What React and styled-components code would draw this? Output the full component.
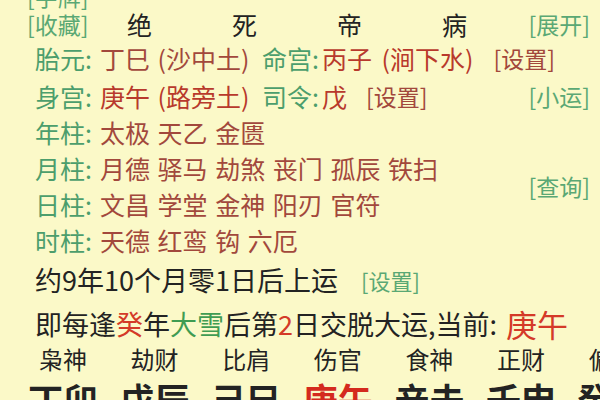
import React from "react";
import styled, { createGlobalStyle } from "styled-components";

const Global = createGlobalStyle`
  html, body { margin: 0; padding: 0; background: #fbf9c8; }
  body { font-family: "Noto Sans CJK SC", "Noto Sans", sans-serif; }
`;

const C = {
  bg: "#fbf9c8",
  green: "#4c9e6c",
  tag: "#5aa874",
  brown: "#a2483c",
  red: "#b8392c",
  bright: "#d43a28",
  ink: "#232323",
};

const Page = styled.div`
  width: 600px;
  height: 400px;
  overflow: hidden;
  background: ${C.bg};
  box-sizing: border-box;
`;

const Inner = styled.div`
  margin-top: -18px;
  padding: 0 10px 0 27px;
  display: flex;
  flex-direction: column;
`;

const Row = styled.div`
  display: flex;
  align-items: center;
  height: ${(p) => p.$h || 36}px;
  line-height: ${(p) => p.$h || 36}px;
  padding-left: ${(p) => p.$indent || 0}px;
  font-size: ${(p) => p.$size || 25}px;
  white-space: nowrap;
  color: ${C.ink};
`;

const Tag = styled.span`
  color: ${(p) => p.$color || C.tag};
  font-size: ${(p) => p.$size || 23}px;
  margin-left: ${(p) => (p.$auto ? "auto" : `${p.$ml || 0}px`)};
`;

const PhaseGrid = styled.div`
  display: grid;
  grid-template-columns: 60px repeat(4, 105px);
  align-items: center;
`;

const Phase = styled.span`
  text-align: center;
  font-size: 25px;
  color: ${C.ink};
`;

const Label = styled.span`
  color: ${C.green};
  display: inline-block;
  width: ${(p) => p.$w || 65}px;
  flex: none;
`;

const Value = styled.span`
  color: ${(p) => p.$color || C.brown};
  display: inline-block;
  width: ${(p) => (p.$w ? `${p.$w}px` : "auto")};
  flex: none;
  word-spacing: ${(p) => p.$ws || 2}px;
`;

const Split = styled.div`
  display: flex;
  align-items: center;
`;

const Stack = styled.div`
  display: flex;
  flex-direction: column;
  flex: 1;
`;

const Span = styled.span`
  color: ${(p) => p.$color || "inherit"};
  font-size: ${(p) => (p.$size ? `${p.$size}px` : "inherit")};
  margin-left: ${(p) => p.$ml || 0}px;
`;

const Cells = styled.div`
  display: flex;
  padding-left: ${(p) => p.$pl}px;
  height: ${(p) => p.$h}px;
  align-items: center;
  white-space: nowrap;
  margin-left: -27px;
`;

const Cell = styled.span`
  flex: none;
  width: 91.6px;
  font-size: ${(p) => p.$size}px;
  font-weight: ${(p) => (p.$bold ? 700 : 400)};
  color: ${(p) => p.$color || C.ink};
  line-height: 1;
`;

const gods = ["枭神", "劫财", "比肩", "伤官", "食神", "正财", "偏财"];
const pillars = ["丁卯", "戊辰", "己巳", "庚午", "辛未", "壬申", "癸酉"];

export default function App() {
  return (
    <Page>
      <Global />
      <Inner>
        <Row $h={28} $size={23}>
          <Tag>[字牌]</Tag>
        </Row>
        <Row $h={28}>
          <PhaseGrid>
            <Tag>[收藏]</Tag>
            <Phase>绝</Phase>
            <Phase>死</Phase>
            <Phase>帝</Phase>
            <Phase>病</Phase>
          </PhaseGrid>
          <Tag $auto>[展开]</Tag>
        </Row>
        <Row $h={40} $indent={8}>
          <Label>胎元:</Label>
          <Value $w={162}>丁巳 (沙中土)</Value>
          <Label $w={60}>命宫:</Label>
          <Value $color={C.red} $ws={4}>丙子 (涧下水)</Value>
          <Tag $color={C.brown} $ml={20}>[设置]</Tag>
        </Row>
        <Row $indent={8}>
          <Label>身宫:</Label>
          <Value $w={162} $color={C.red}>庚午 (路旁土)</Value>
          <Label $w={60}>司令:</Label>
          <Value $color={C.red}>戊</Value>
          <Tag $color={C.brown} $ml={19}>[设置]</Tag>
          <Tag $auto>[小运]</Tag>
        </Row>
        <Row $indent={8}>
          <Label>年柱:</Label>
          <Value>太极 天乙 金匮</Value>
        </Row>
        <Split>
          <Stack>
            <Row $indent={8}>
              <Label>月柱:</Label>
              <Value>月德 驿马 劫煞 丧门 孤辰 铁扫</Value>
            </Row>
            <Row $indent={8}>
              <Label>日柱:</Label>
              <Value>文昌 学堂 金神 阳刃 官符</Value>
            </Row>
          </Stack>
          <Tag>[查询]</Tag>
        </Split>
        <Row $indent={8}>
          <Label>时柱:</Label>
          <Value>天德 红鸾 钩 六厄</Value>
        </Row>
        <Row $h={44} $indent={8} $size={27}>
          约9年10个月零1日后上运
          <Tag $ml={23} $size={22}>[设置]</Tag>
        </Row>
        <Row $h={44} $indent={8} $size={27}>
          即每逢<Span $color={C.bright}>癸</Span>年
          <Span $color="#3f9c52">大雪</Span>后第
          <Span $color={C.bright}>2</Span>日交脱大运,当前:
          <Span $color={C.bright} $size={31} $ml={9}>庚午</Span>
        </Row>
        <Cells $pl={39} $h={26}>
          {gods.map((g) => (
            <Cell key={g} $size={24}>{g}</Cell>
          ))}
        </Cells>
        <Cells $pl={28} $h={52}>
          {pillars.map((g) => (
            <Cell key={g} $size={35} $bold $color={g === "庚午" ? "#d42a1e" : C.ink}>
              {g}
            </Cell>
          ))}
        </Cells>
      </Inner>
    </Page>
  );
}
